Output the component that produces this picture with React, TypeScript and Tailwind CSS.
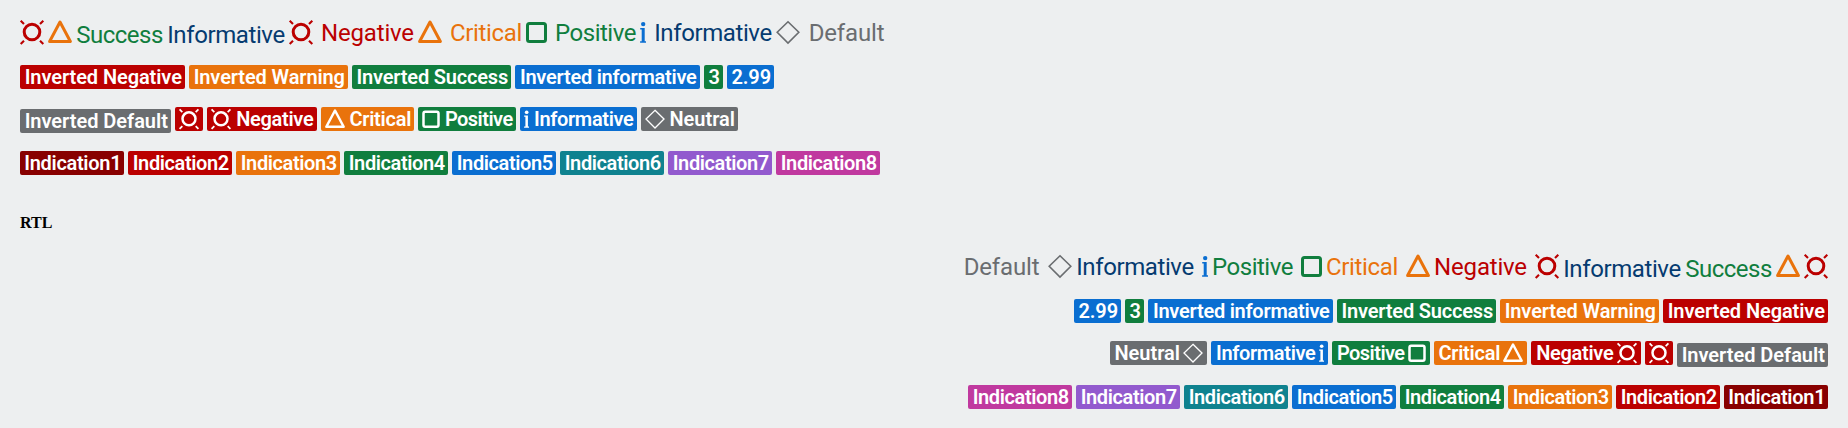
import React from 'react';

type IconName = 'negative' | 'critical' | 'positive' | 'info' | 'neutral';

const iconBox: Record<IconName, { vb: string; big: string; small: string }> = {
  negative: { vb: '0 0 24 26', big: 'w-6', small: 'w-5' },
  critical: { vb: '0 0 24 26', big: 'w-6', small: 'w-5' },
  positive: { vb: '0 0 21 26', big: 'w-[21px]', small: 'w-[18px]' },
  info: { vb: '0 0 6 26', big: 'w-[6px]', small: 'w-[5px]' },
  neutral: { vb: '0 0 24 26', big: 'w-6', small: 'w-5' },
};

function Icon({ name, small }: { name: IconName; small?: boolean }) {
  const b = iconBox[name];
  return (
    <svg
      viewBox={b.vb}
      fill="none"
      stroke="currentColor"
      className={`shrink-0 overflow-visible ${small ? `mt-[1.3px] h-[21.7px] ${b.small}` : `h-[26px] ${b.big}`}`}
    >
      {name === 'negative' && (
        <>
          <circle cx="12" cy="13" r="7.8" strokeWidth="3" />
          <path d="M.7 1.7l3.3 3.3M23.3 1.7l-3.3 3.3M.7 25l3.3-3.3M23.3 25l-3.3-3.3" strokeWidth="2.1" />
        </>
      )}
      {name === 'critical' && <path d="M12 3L22.4 22.5H1.6z" strokeWidth="3" strokeLinejoin="round" />}
      {name === 'positive' && <rect x="1.5" y="4.5" width="18" height="18" rx="2" strokeWidth="3" />}
      {name === 'info' && (
        <g fill="currentColor" stroke="none">
          <circle cx="3.2" cy="5.1" r="2.2" />
          <path d="M.2 9h4.5v13.2H6v1.6H.1v-1.6H1.7V10.6H.2z" />
        </g>
      )}
      {name === 'neutral' && <path d="M12 2.8L22.8 13.3 12 24 1.2 13.3z" strokeWidth="1.6" />}
    </svg>
  );
}

interface Item {
  text?: string;
  icon?: IconName;
  tone: string;
  iconTone?: string;
  fit?: string;
  low?: boolean;
}

const plain: Item[] = [
  { icon: 'negative', tone: 'text-[#bb0000]' },
  { icon: 'critical', tone: 'text-[#e9730c]' },
  { text: 'Success', tone: 'text-[#107e3e]', fit: 'w-[87px] tracking-[-0.5px]', low: true },
  { text: 'Informative', tone: 'text-[#053b70]', fit: 'w-[118px] tracking-[-0.4px]', low: true },
  { text: 'Negative', icon: 'negative', tone: 'text-[#bb0000]', fit: 'w-[93px] tracking-[-0.18px]' },
  { text: 'Critical', icon: 'critical', tone: 'text-[#e9730c]', fit: 'w-[72px] tracking-[-0.33px]' },
  { text: 'Positive', icon: 'positive', tone: 'text-[#107e3e]', fit: 'w-[81px] tracking-[-0.5px]' },
  { text: 'Informative', icon: 'info', tone: 'text-[#053b70]', iconTone: 'text-[#0a6ed1]', fit: 'w-[118px] tracking-[-0.4px]' },
  { text: 'Default', icon: 'neutral', tone: 'text-[#6a6d70]', fit: 'w-[77px] tracking-[-0.15px]' },
];

const inverted: Item[] = [
  { text: 'Inverted Negative', tone: 'bg-[#bb0000]', fit: 'w-[157px] tracking-[-0.08px]' },
  { text: 'Inverted Warning', tone: 'bg-[#e9730c]', fit: 'w-[151px] tracking-[-0.12px]' },
  { text: 'Inverted Success', tone: 'bg-[#107e3e]', fit: 'w-[151px] tracking-[-0.18px]' },
  { text: 'Inverted informative', tone: 'bg-[#0a6ed1]', fit: 'w-[177px] tracking-[-0.25px]' },
  { text: '3', tone: 'bg-[#107e3e]', fit: 'w-[11px]' },
  { text: '2.99', tone: 'bg-[#0a6ed1]', fit: 'w-[39px] tracking-[-0.15px]' },
];

const invertedIcons: Item[] = [
  { text: 'Inverted Default', tone: 'bg-[#6a6d70]', fit: 'w-[143px] tracking-[-0.03px]', low: true },
  { icon: 'negative', tone: 'bg-[#bb0000]' },
  { text: 'Negative', icon: 'negative', tone: 'bg-[#bb0000]', fit: 'w-[78px] tracking-[-0.3px]' },
  { text: 'Critical', icon: 'critical', tone: 'bg-[#e9730c]', fit: 'w-[61px] tracking-[-0.25px]' },
  { text: 'Positive', icon: 'positive', tone: 'bg-[#107e3e]', fit: 'w-[68px] tracking-[-0.55px]' },
  { text: 'Informative', icon: 'info', tone: 'bg-[#0a6ed1]', fit: 'w-[100px] tracking-[-0.35px]' },
  { text: 'Neutral', icon: 'neutral', tone: 'bg-[#6a6d70]', fit: 'w-[65px]' },
];

const indications: Item[] = [
  'bg-[#880000]',
  'bg-[#bb0000]',
  'bg-[#e9730c]',
  'bg-[#107e3e]',
  'bg-[#0a6ed1]',
  'bg-[#0f828f]',
  'bg-[#925ace]',
  'bg-[#c0399f]',
].map((tone, i) => ({
  text: `Indication${i + 1}`,
  tone,
  fit: i === 0 ? 'w-[96px] tracking-[-0.3px]' : 'w-[96px] tracking-[-0.4px]',
}));

function Status({ item }: { item: Item }) {
  return (
    <span className={`flex gap-2 ${item.tone} ${item.low ? 'pt-0.5' : ''}`}>
      {item.icon && (
        <span className={`flex ${item.iconTone ?? ''}`}>
          <Icon name={item.icon} />
        </span>
      )}
      {item.text && (
        <span className={`flex justify-center whitespace-nowrap text-[24px] leading-7 ${item.fit}`}>{item.text}</span>
      )}
    </span>
  );
}

function Tag({ item }: { item: Item }) {
  return (
    <span className={`flex h-6 gap-1 rounded-[2px] px-1 text-white ${item.tone} ${item.low ? 'mt-0.5' : ''}`}>
      {item.icon && <Icon name={item.icon} small />}
      {item.text && (
        <span className={`flex justify-center whitespace-nowrap pl-[1.5px] text-[20px] font-semibold leading-6 ${item.fit}`}>
          {item.text}
        </span>
      )}
    </span>
  );
}

function Board({ dir }: { dir: 'ltr' | 'rtl' }) {
  return (
    <section dir={dir} className="flex flex-col px-5">
      <div className="flex h-[46px] items-start gap-1">
        {plain.map((item, i) => <Status key={i} item={item} />)}
      </div>
      <div className="flex h-[42px] items-start gap-1">
        {inverted.map((item, i) => <Tag key={i} item={item} />)}
      </div>
      <div className="flex h-11 items-start gap-1">
        {invertedIcons.map((item, i) => <Tag key={i} item={item} />)}
      </div>
      <div className="flex h-6 items-start gap-1">
        {indications.map((item, i) => <Tag key={i} item={item} />)}
      </div>
    </section>
  );
}

export default function App() {
  return (
    <main className="flex h-[428px] flex-col overflow-hidden bg-[#edeff0] pt-[19px] font-['Roboto',sans-serif]">
      <Board dir="ltr" />
      <div className="h-[78px] px-5 pt-[39px]">
        <h2 className="font-['Liberation_Serif',serif] text-[16px] font-bold leading-[18px] text-black">RTL</h2>
      </div>
      <Board dir="rtl" />
    </main>
  );
}
